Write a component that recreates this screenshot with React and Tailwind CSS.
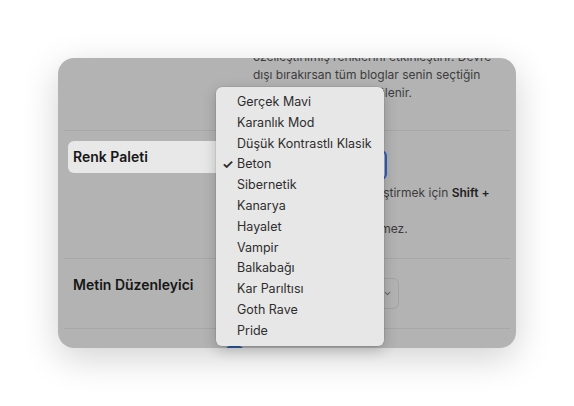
import { ChevronDown } from "lucide-react";

const palettes = [
  "Gerçek Mavi",
  "Karanlık Mod",
  "Düşük Kontrastlı Klasik",
  "Beton",
  "Sibernetik",
  "Kanarya",
  "Hayalet",
  "Vampir",
  "Balkabağı",
  "Kar Parıltısı",
  "Goth Rave",
  "Pride",
];

function PaletteMenu({ selected }) {
  return (
    <div className="absolute left-[158px] top-[29px] w-[168px] rounded-[6px] bg-[#e7e7e7] pt-[5px] pb-[4px] shadow-[0_4px_14px_rgba(0,0,0,0.22),0_0_0_0.5px_rgba(0,0,0,0.12)]">
      <ul>
        {palettes.map((name) => (
          <li
            key={name}
            className="relative flex h-[20.8px] items-center pl-[21px] text-[12.5px] text-[#2e2e2e]"
          >
            {name === selected && (
              <span className="absolute left-[6px] text-[13px] font-bold">✓</span>
            )}
            {name}
          </li>
        ))}
      </ul>
    </div>
  );
}

export default function App() {
  return (
    <div
      className="flex h-[406px] w-full items-center justify-center bg-white"
      style={{ fontFamily: "Inter, 'Noto Sans', sans-serif" }}
    >
      <div className="relative h-[290px] w-[458px]">
        <div className="h-full w-full overflow-hidden rounded-[16px] bg-[#b3b3b3] px-[6px] shadow-[0_10px_36px_rgba(0,0,0,0.18)]">
          <div className="-mt-[10px]">
            {/* Renkler */}
            <div className="flex border-b border-[#a7a7a7] pb-[28px]">
              <div className="w-[189px] shrink-0" />
              <p className="whitespace-nowrap text-[12px] leading-[18px] text-[#3c3c3c]">
                özelleştirilmiş renklerini etkinleştirir. Devre
                <br />
                dışı bırakırsan tüm bloglar senin seçtiğin
                <br />
                tüm renkleriyle görüntülenir.
              </p>
            </div>

            {/* Renk Paleti */}
            <div className="flex border-b border-[#a7a7a7] pb-[20px]">
              <div className="w-[189px] shrink-0 pt-[10px] pl-[4px]">
                <div className="h-[32px] w-[181px] rounded-[6px] bg-[#e8e8e8] px-[5px] text-[14px] font-semibold leading-[32px] text-[#161616]">
                  Renk Paleti
                </div>
              </div>
              <div className="pt-[19px]">
                <div className="flex h-[30px] w-[134px] items-center rounded-[6px] border-2 border-[#2f5fc4] px-2 text-[13px] text-[#2a2a2a]">
                  Beton
                </div>
                <p className="mt-[4px] whitespace-nowrap text-[12px] leading-[18px] text-[#3c3c3c]">
                  Renk paletini hızla değiştirmek için{" "}
                  <b className="font-semibold text-[#222]">Shift +</b>
                  <br />
                  P tuşlarına bas. Bu
                  <br />
                  diğer cihazlarla eşitlenmez.
                </p>
              </div>
            </div>

            {/* Metin Düzenleyici */}
            <div className="flex border-b border-[#a7a7a7] pb-[19px]">
              <div className="w-[189px] shrink-0 pt-[16px] pl-[9px] text-[14px] font-semibold leading-[20px] text-[#161616]">
                Metin Düzenleyici
              </div>
              <div className="pt-[19px]">
                <div className="flex h-[31px] w-[146px] items-center justify-between rounded-[6px] border border-[#a3a3a3] pl-2 pr-[6px] text-[13px] text-[#2a2a2a]">
                  <span>Zengin Metin</span>
                  <ChevronDown className="h-[9px] w-[9px] text-[#6a6a6a]" strokeWidth={3} />
                </div>
              </div>
            </div>

            {/* Seçenek */}
            <div className="flex items-start gap-[11px] pt-[17px] pl-[162px]">
              <div className="h-[16px] w-[17px] rounded-[4px] bg-[#2c5a9c]" />
              <span className="text-[13px] leading-[16px] text-[#222]">
                Bloglarda özel yazı tipleri
              </span>
            </div>
          </div>
        </div>

        <PaletteMenu selected="Beton" />
      </div>
    </div>
  );
}
